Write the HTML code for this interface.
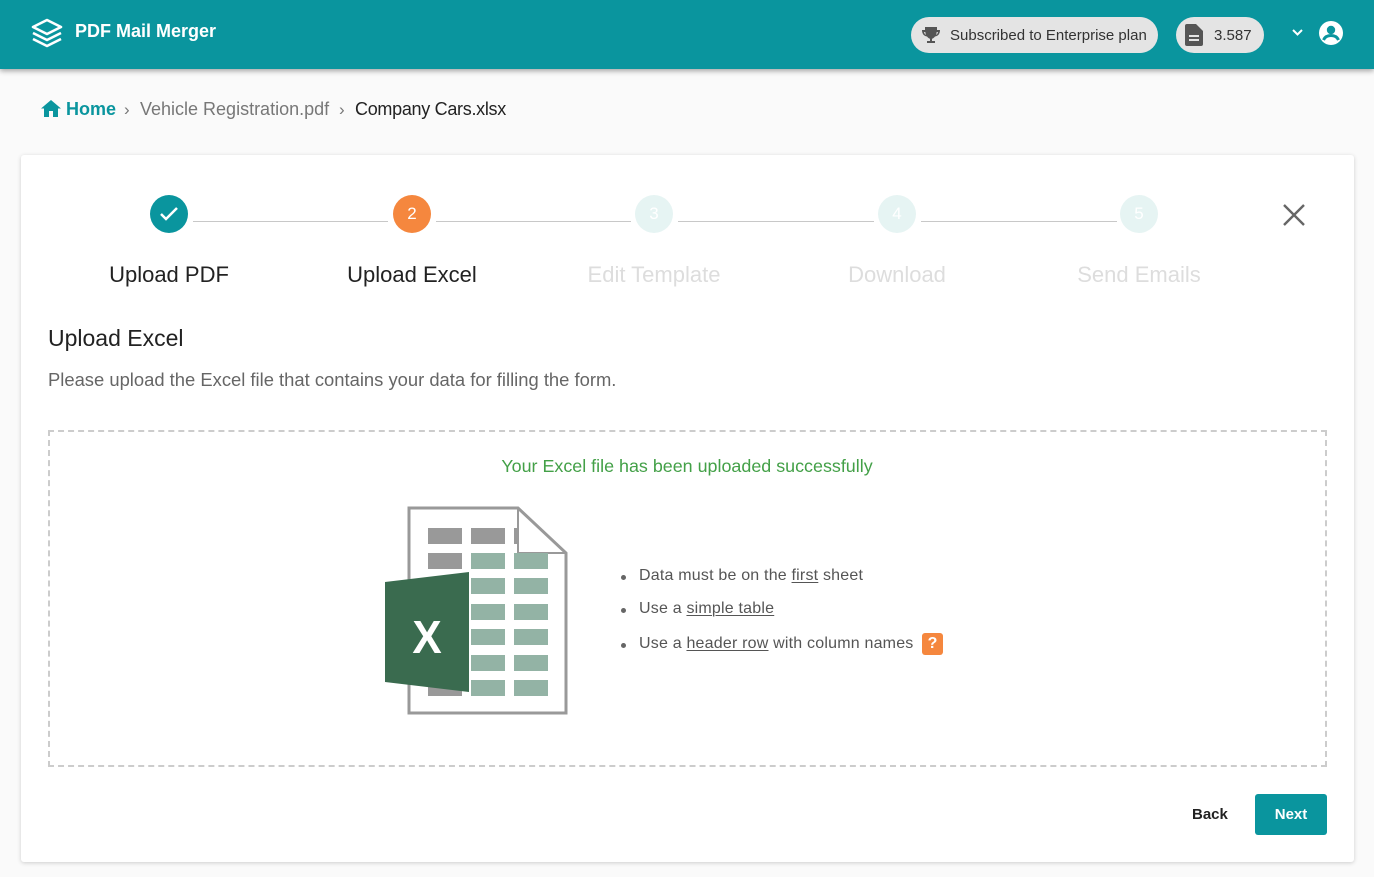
<!DOCTYPE html>
<html><head><meta charset="utf-8"><style>
*{box-sizing:border-box;margin:0;padding:0}
body{width:1374px;height:877px;background:#fafafa;font-family:"Liberation Sans",sans-serif;position:relative;overflow:hidden}
.hdr{position:absolute;left:0;top:0;width:1374px;height:69px;background:#0a959e;box-shadow:0 2px 5px rgba(0,0,0,.35)}
.abs{position:absolute}
.pill{position:absolute;top:17px;height:36px;border-radius:18px;background:#e4e4e4;color:#333;font-size:15px;display:flex;align-items:center}
.card{position:absolute;left:21px;top:155px;width:1333px;height:707px;background:#fff;box-shadow:0 1px 4px rgba(0,0,0,.18);border-radius:3px}
.c{position:absolute;width:38px;height:38px;border-radius:50%;top:195px;color:#fff;font-size:17px;display:flex;align-items:center;justify-content:center}
.ln{position:absolute;top:221px;height:1px;background:#c8c8c8}
.lb{position:absolute;top:262px;font-size:22px;width:260px;text-align:center}
.li{position:absolute;left:639px;font-size:16px;letter-spacing:0.2px;color:#555;font-family:"Liberation Sans",sans-serif}
.li:before{content:"";position:absolute;left:-18px;top:8px;width:5px;height:5px;border-radius:50%;background:#666}
u{text-decoration-thickness:1px;text-underline-offset:2px}
</style></head><body>
<div class="hdr">
<svg class="abs" style="left:31px;top:18px" width="32" height="30" viewBox="0 0 32 30" fill="none" stroke="#fff" stroke-width="2.6" stroke-linejoin="round"><path d="M16 2 L30 9 L16 16 L2 9 Z"/><path d="M2 15 L16 22 L30 15"/><path d="M2 21 L16 28 L30 21"/></svg>
<div class="abs" style="left:75px;top:21px;color:#fff;font-size:18px;font-weight:bold">PDF Mail Merger</div>
<div class="pill" style="left:911px;width:247px"><svg style="margin-left:10px" width="20" height="20" viewBox="0 0 20 20" fill="#555"><path d="M4 2h12v3h3c0 4-2 6-5 6.5-1 1.3-2 2-3 2.2V16h3v2H6v-2h3v-2.3c-1-.2-2-.9-3-2.2C3 11 1 9 1 5h3z M3 7c.3 1.5 1 2.5 1.8 3L4.3 7z M17 7h-1.3l-.5 3c.8-.5 1.5-1.5 1.8-3z"/></svg><span style="margin-left:9px">Subscribed to Enterprise plan</span></div>
<div class="pill" style="left:1176px;width:88px"><svg style="margin-left:9px" width="18" height="22" viewBox="0 0 18 22" fill="#555"><path d="M2 0h9l7 7v13a2 2 0 0 1-2 2H2a2 2 0 0 1-2-2V2a2 2 0 0 1 2-2z"/><rect x="4" y="11" width="10" height="2" fill="#e4e4e4"/><rect x="4" y="15" width="10" height="2" fill="#e4e4e4"/></svg><span style="margin-left:11px">3.587</span></div>
<svg class="abs" style="left:1291px;top:28px" width="13" height="9" viewBox="0 0 13 9" fill="none" stroke="#fff" stroke-width="2"><path d="M2 2l4.5 4.5L11 2"/></svg>
<svg class="abs" style="left:1319px;top:21px" width="24" height="24" viewBox="0 0 24 24"><circle cx="12" cy="12" r="12" fill="#fff"/><circle cx="12" cy="9" r="4.2" fill="#0a959e"/><path d="M4.5 19c1.5-3.5 4.5-4.5 7.5-4.5s6 1 7.5 4.5" fill="none" stroke="#0a959e" stroke-width="3"/></svg>
</div>
<svg class="abs" style="left:41px;top:100px" width="20" height="17" viewBox="0 0 20 17" fill="#0a959e"><path d="M10 0L0 8.5h3V17h5v-6h4v6h5V8.5h3z"/></svg>
<div class="abs" style="left:66px;top:99px;font-size:18px;color:#0a959e;font-weight:bold">Home</div>
<div class="abs" style="left:124px;top:100px;font-size:17px;color:#777">›</div>
<div class="abs" style="left:140px;top:99px;font-size:18px;color:#777">Vehicle Registration.pdf</div>
<div class="abs" style="left:339px;top:100px;font-size:17px;color:#777">›</div>
<div class="abs" style="left:355px;top:99px;font-size:18px;color:#222;letter-spacing:-0.3px">Company Cars.xlsx</div>
<div class="card"></div>
<div class="c" style="left:150px;background:#0a959e"><svg width="20" height="16" viewBox="0 0 20 16" fill="none" stroke="#fff" stroke-width="2.5"><path d="M2 8l5 5L18 2"/></svg></div>
<div class="c" style="left:393px;background:#f5873e">2</div>
<div class="c" style="left:635px;background:#e6f4f3">3</div>
<div class="c" style="left:878px;background:#e6f4f3">4</div>
<div class="c" style="left:1120px;background:#e6f4f3">5</div>
<div class="ln" style="left:193px;width:195px"></div>
<div class="ln" style="left:436px;width:195px"></div>
<div class="ln" style="left:678px;width:196px"></div>
<div class="ln" style="left:921px;width:196px"></div>
<div class="lb" style="left:39px;color:#222">Upload PDF</div>
<div class="lb" style="left:282px;color:#222">Upload Excel</div>
<div class="lb" style="left:524px;color:#ddd">Edit Template</div>
<div class="lb" style="left:767px;color:#ddd">Download</div>
<div class="lb" style="left:1009px;color:#ddd">Send Emails</div>
<svg class="abs" style="left:1282px;top:203px" width="24" height="24" viewBox="0 0 24 24" stroke="#666" stroke-width="2.4"><path d="M2 2l20 20M22 2L2 22"/></svg>
<div class="abs" style="left:48px;top:325px;font-size:23px;color:#222">Upload Excel</div>
<div class="abs" style="left:48px;top:369px;font-size:18.4px;color:#666">Please upload the Excel file that contains your data for filling the form.</div>
<div class="abs" style="left:48px;top:430px;width:1279px;height:337px;border:2px dashed #ccc"></div>
<div class="abs" style="left:0;width:1374px;text-align:center;top:456px;font-size:17.9px;color:#43a047">Your Excel file has been uploaded successfully</div>
<svg class="abs" style="left:380px;top:500px" width="200" height="220" viewBox="380 500 200 220">
<path d="M409 508h109l48 45v160H409z" fill="#fff" stroke="#999" stroke-width="3"/>
<path d="M518 508v45h48" fill="none" stroke="#999" stroke-width="2"/>
<g fill="#999"><rect x="428" y="528" width="34" height="16"/><rect x="471" y="528" width="34" height="16"/><rect x="514" y="528" width="4" height="16"/><rect x="428" y="553" width="34" height="16"/><rect x="428" y="680" width="34" height="16"/></g>
<g fill="#93b3a5"><rect x="471" y="553" width="34" height="16"/><rect x="514" y="553" width="34" height="16"/><rect x="471" y="578" width="34" height="16"/><rect x="514" y="578" width="34" height="16"/><rect x="471" y="604" width="34" height="16"/><rect x="514" y="604" width="34" height="16"/><rect x="471" y="629" width="34" height="16"/><rect x="514" y="629" width="34" height="16"/><rect x="471" y="655" width="34" height="16"/><rect x="514" y="655" width="34" height="16"/><rect x="471" y="680" width="34" height="16"/><rect x="514" y="680" width="34" height="16"/></g>
<path d="M385 582L469 572V692L385 682z" fill="#3a6b4f"/>
<text x="427" y="653" font-family="Liberation Sans" font-weight="bold" font-size="44" fill="#fff" text-anchor="middle" transform="scale(1,1.05) translate(0,-31)">X</text>
</svg>
<div class="li" style="top:567px">Data must be on the <u>first</u> sheet</div>
<div class="li" style="top:600px">Use a <u>simple table</u></div>
<div class="li" style="top:635px">Use a <u>header row</u> with column names</div>
<div class="abs" style="left:922px;top:633px;width:21px;height:22px;background:#f5873e;border-radius:3px;color:#fff;font-weight:bold;font-size:16px;text-align:center;line-height:22px">?</div>
<div class="abs" style="left:1192px;top:806px;font-size:15px;color:#222;font-weight:bold">Back</div>
<div class="abs" style="left:1255px;top:794px;width:72px;height:41px;background:#0a959e;border-radius:3px;color:#fff;font-weight:bold;font-size:15px;text-align:center;line-height:41px">Next</div>
</body></html>
